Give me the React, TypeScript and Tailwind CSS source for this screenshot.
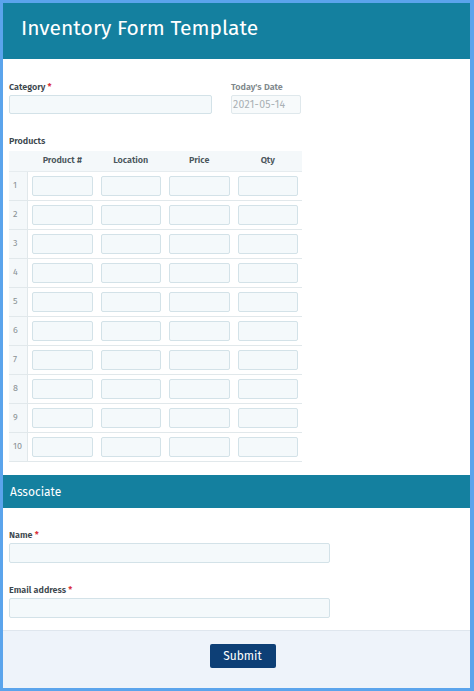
import React from "react";

const font = { fontFamily: '"Fira Sans", "Noto Sans", "Open Sans", sans-serif' };

function Label({ text, req, muted }: { text: string; req?: boolean; muted?: boolean }) {
  return (
    <div className={`h-[12px] leading-[12px] text-[9px] font-semibold ${muted ? "text-[#80888c]" : "text-[#3c474d]"}`}>
      {text}
      {req && <span className="text-[#d9303a]"> *</span>}
    </div>
  );
}

const inputCls = "block bg-[#f4f9fb] border border-[#d3e2e8] rounded-[2px]";

export default function App() {
  const rows = Array.from({ length: 10 }, (_, i) => i + 1);
  return (
    <div className="w-[474px] h-[691px] bg-[#5ba4ec] pt-[3px] pl-[3px] pr-[4px] pb-[3px]" style={font}>
      <div className="w-full h-full bg-white flex flex-col">
        <div className="h-[56px] shrink-0 bg-[#14809f] flex items-center pl-[18px] pb-[6px]">
          <span className="text-white text-[21px] leading-none">Inventory Form Template</span>
        </div>

        <div className="pl-[6px] pt-[22px] flex flex-col">
          <div className="flex gap-[19px]">
            <div className="flex flex-col gap-[2px]">
              <Label text="Category" req />
              <div className={`${inputCls} w-[203px] h-[19px]`} />
            </div>
            <div className="flex flex-col gap-[2px]">
              <Label text="Today's Date" muted />
              <div className={`${inputCls} w-[70px] h-[19px] bg-[#f7fafb] border-[#dfe8ec] text-[10.5px] text-[#a9b0b4] pl-[1px] leading-[17px] tracking-[0.3px]`}>
                2021-05-14
              </div>
            </div>
          </div>

          <div className="mt-[21px]">
            <Label text="Products" />
          </div>
          <div className="mt-[4px] w-[293px]">
            <div className="grid grid-cols-[19px_repeat(4,1fr)] h-[21px] bg-[#f4f8fa] border-b border-[#e6ecef] text-[9px] font-semibold text-[#4a555a] items-center">
              <div />
              <div className="text-center">Product #</div>
              <div className="text-center">Location</div>
              <div className="text-center">Price</div>
              <div className="text-center">Qty</div>
            </div>
            {rows.map((r) => (
              <div key={r} className="grid grid-cols-[19px_repeat(4,1fr)] h-[29px] border-b border-[#e1e8eb] items-center">
                <div className="h-full bg-[#f4f8fa] border-r border-[#e1e8eb] flex items-center pl-[4px] text-[9px] text-[#8a9295]">
                  {r}
                </div>
                {[0, 1, 2, 3].map((c) => (
                  <div key={c} className="px-[4px]">
                    <div className={`${inputCls} h-[20px]`} />
                  </div>
                ))}
              </div>
            ))}
          </div>
        </div>

        <div className="mt-[13px] h-[33px] shrink-0 bg-[#14809f] flex items-center pl-[7px]">
          <span className="text-white text-[12px]">Associate</span>
        </div>

        <div className="pl-[6px] pt-[21px] flex flex-col">
          <Label text="Name" req />
          <div className={`${inputCls} mt-[2px] w-[321px] h-[20px]`} />
          <div className="mt-[21px]">
            <Label text="Email address" req />
          </div>
          <div className={`${inputCls} mt-[2px] w-[321px] h-[20px]`} />
        </div>

        <div className="mt-[12px] flex-1 bg-[#eef3fa] border-t border-[#dfe6ee] flex justify-center pt-[13px]">
          <button className="ml-[12px] h-[24px] w-[66px] bg-[#0d3f76] rounded-[2px] text-white text-[12px] leading-none">
            Submit
          </button>
        </div>
      </div>
    </div>
  );
}
